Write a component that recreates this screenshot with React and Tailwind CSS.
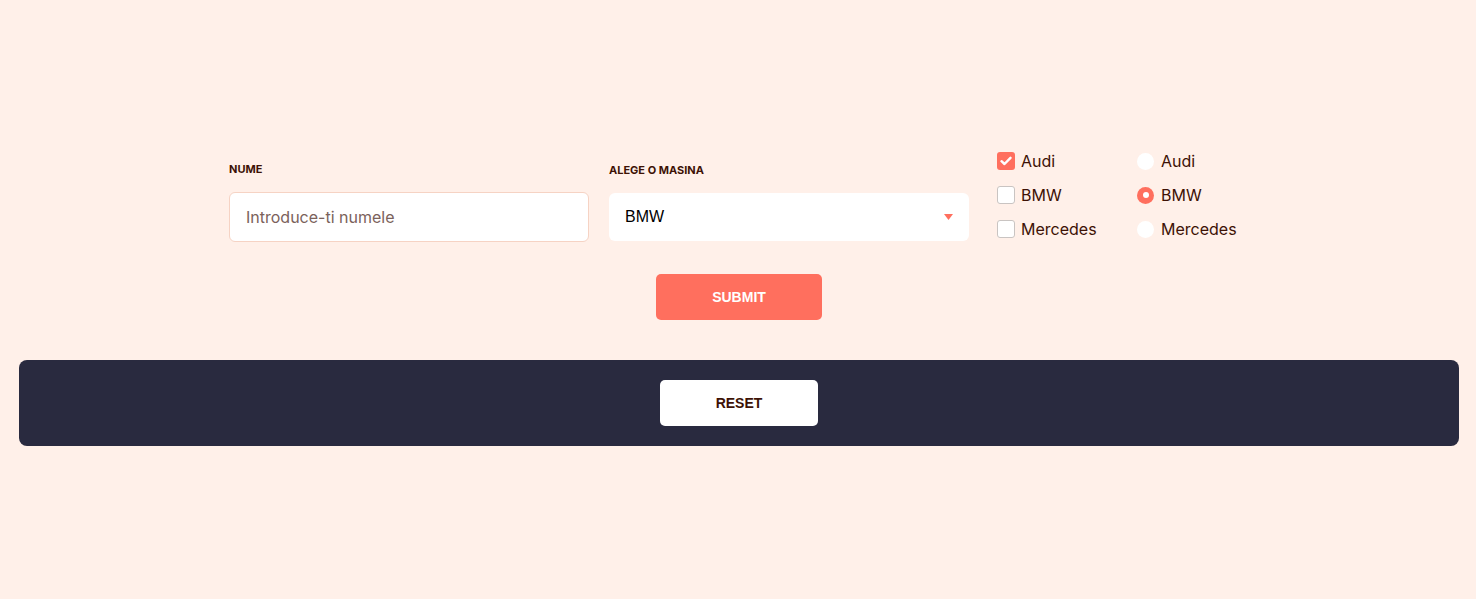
import React, { useState } from 'react';

const cars = ['Audi', 'BMW', 'Mercedes'];

const Checkbox = ({ checked, label, onChange }) => (
  <label className="flex items-center gap-[6px] h-[22px] cursor-pointer" onClick={onChange}>
    {checked ? (
      <span className="w-[18px] h-[18px] rounded-[3px] bg-[#ff6f5e] flex items-center justify-center">
        <svg width="12" height="10" viewBox="0 0 12 10" fill="none">
          <path d="M1.5 5.2 L4.5 8 L10.5 1.8" stroke="white" strokeWidth="2.4" strokeLinecap="round" strokeLinejoin="round" />
        </svg>
      </span>
    ) : (
      <span className="w-[18px] h-[18px] rounded-[3px] bg-white border border-[#c9c4c2]" />
    )}
    <span className="text-[16px] text-[#3d1205]">{label}</span>
  </label>
);

const Radio = ({ checked, label, onChange }) => (
  <label className="flex items-center gap-[7px] h-[22px] cursor-pointer" onClick={onChange}>
    {checked ? (
      <span className="w-[17px] h-[17px] rounded-full bg-[#ff6f5e] flex items-center justify-center">
        <span className="w-[6px] h-[6px] rounded-full bg-white" />
      </span>
    ) : (
      <span className="w-[17px] h-[17px] rounded-full bg-white" />
    )}
    <span className="text-[16px] text-[#3d1205]">{label}</span>
  </label>
);

export default function App() {
  const [checks, setChecks] = useState({ Audi: true, BMW: false, Mercedes: false });
  const [radio, setRadio] = useState('BMW');

  return (
    <div className="min-h-[599px] bg-[#fff0e9] pt-[150px] font-['Inter',sans-serif]">
      <div className="flex justify-center gap-[20px]">
        <div className="w-[360px]">
          <div className="mt-[12px] mb-[16px] text-[11px] leading-[14px] font-bold text-[#3d1205]">NUME</div>
          <input
            className="w-full h-[50px] rounded-[6px] bg-white border border-[#f6d3c4] px-[16px] pb-[1px] text-[16px] text-[#3d1205] placeholder:text-[#7b625b] outline-none"
            placeholder="Introduce-ti numele"
          />
        </div>
        <div className="w-[360px]">
          <div className="mt-[13px] mb-[16px] text-[11px] leading-[14px] font-bold text-[#3d1205]">ALEGE O MASINA</div>
          <div className="h-[48px] mt-[1px] rounded-[6px] bg-white flex items-center justify-between px-[16px] font-['Liberation_Sans',Arial,sans-serif]">
            <span className="text-[16px] text-black">BMW</span>
            <svg width="9" height="6" viewBox="0 0 9 6">
              <path d="M0 0 H9 L4.5 6 Z" fill="#ff6f5e" />
            </svg>
          </div>
        </div>
        <div className="flex ml-[8px]">
          <div className="w-[140px] flex flex-col gap-[12px]">
            {cars.map((c) => (
              <Checkbox key={c} label={c} checked={checks[c]} onChange={() => setChecks({ ...checks, [c]: !checks[c] })} />
            ))}
          </div>
          <div className="w-[110px] flex flex-col gap-[12px]">
            {cars.map((c) => (
              <Radio key={c} label={c} checked={radio === c} onChange={() => setRadio(c)} />
            ))}
          </div>
        </div>
      </div>

      <div className="flex justify-center pl-[2px] mt-[32px]">
        <button className="w-[166px] h-[46px] rounded-[5px] bg-[#ff6f5e] text-white text-[14px] font-bold font-['Liberation_Sans',Arial,sans-serif]">
          SUBMIT
        </button>
      </div>

      <div className="pl-[2px] mt-[40px]">
        <div className="mx-auto w-[1440px] rounded-[8px] bg-[#292a3f] py-[20px] flex justify-center">
          <button className="w-[158px] h-[46px] rounded-[5px] bg-white text-[#3d1205] text-[14px] font-bold font-['Liberation_Sans',Arial,sans-serif]">
            RESET
          </button>
        </div>
      </div>
    </div>
  );
}
